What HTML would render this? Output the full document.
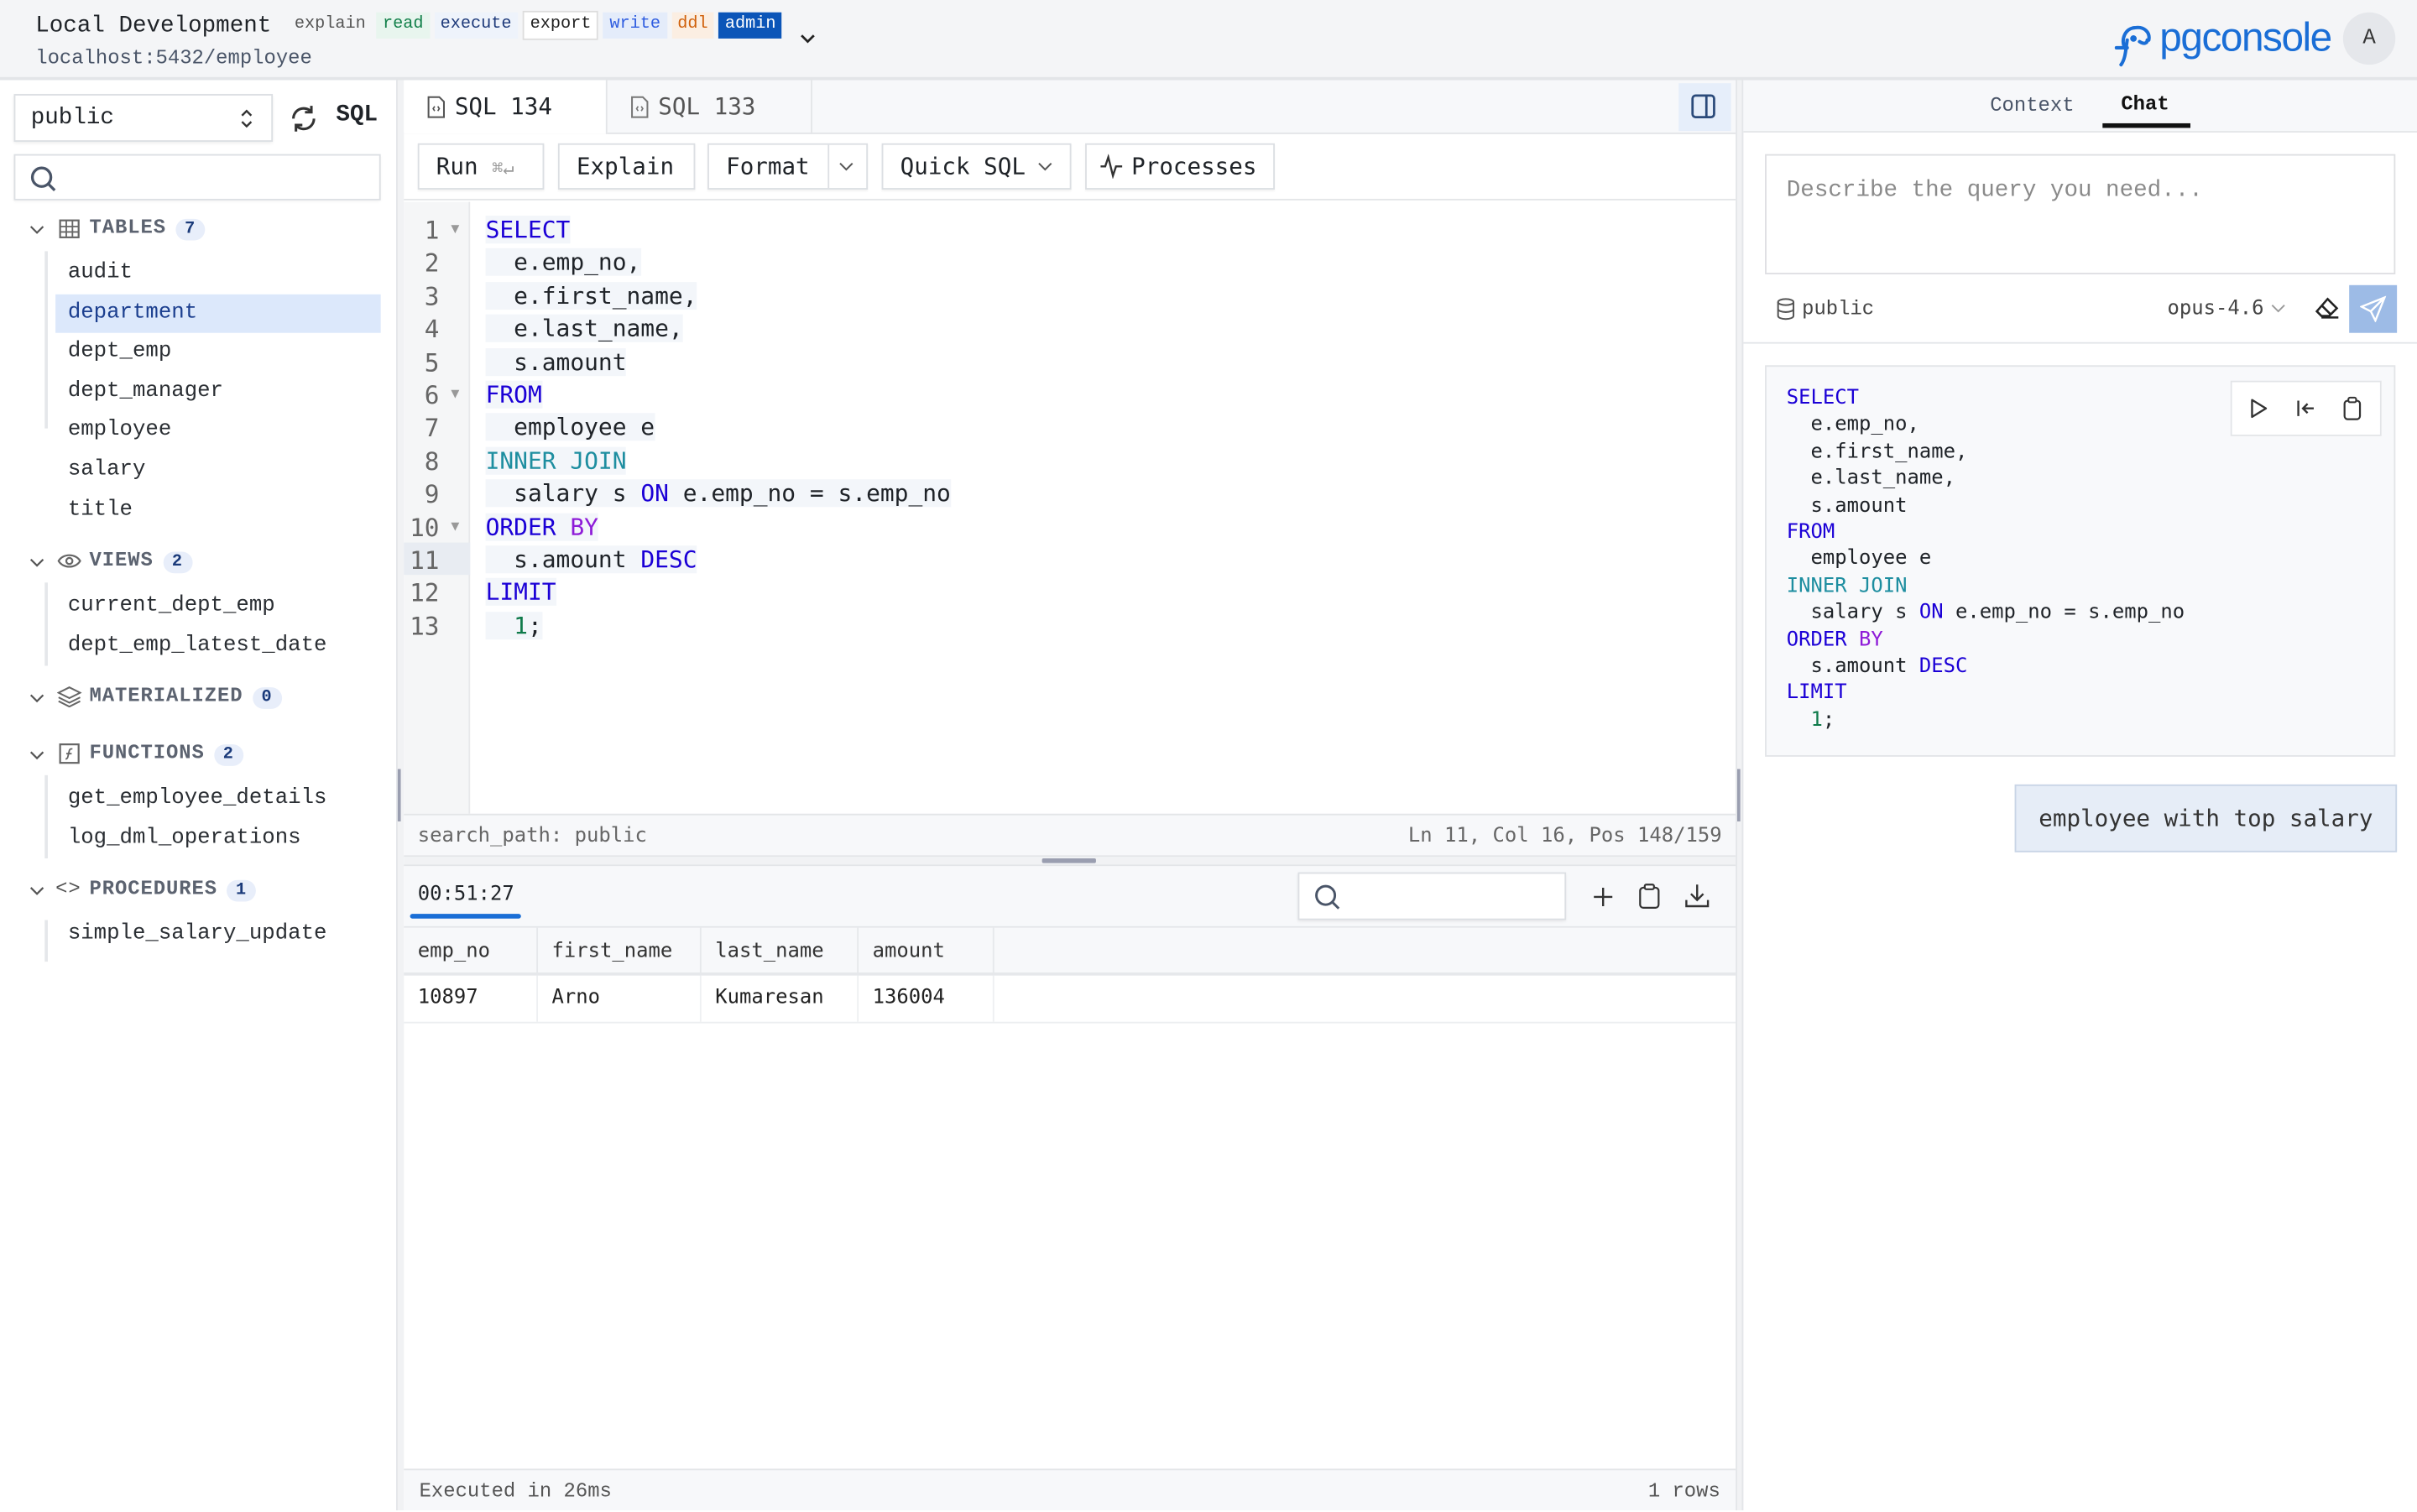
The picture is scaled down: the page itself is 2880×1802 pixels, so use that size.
<!DOCTYPE html>
<html><head><meta charset="utf-8">
<style>
*{box-sizing:border-box;margin:0;padding:0}
html,body{width:2880px;height:1800px;overflow:hidden;background:#fff}
#w{position:absolute;left:0;top:0;width:1568px;height:980px;transform:scale(1.836735);transform-origin:0 0;font-family:"Liberation Mono",monospace;color:#1f2328;background:#fff}
.a{position:absolute}
.dj{font-family:"DejaVu Sans Mono",monospace}
.hdr{left:0;top:0;width:1568px;height:52px;background:#f4f5f7;border-bottom:2px solid #e3e5e8}
.tag{display:inline-block;font-size:11px;padding:2px 4px;margin-right:3px;vertical-align:middle;line-height:13px}
.side{left:0;top:52px;width:257px;height:928px;background:#fff}
.sec{font-size:13px;font-weight:bold;color:#5c6370;letter-spacing:.5px}
.badge{display:inline-block;background:#e8eefa;color:#1a3a7a;border-radius:8px;font-size:11px;padding:1px 6px;margin-left:6px;font-weight:bold}
.item{font-size:14px;color:#2a2e33;height:25.6px;line-height:25.6px;padding-left:8px}
.btn{position:absolute;top:93px;height:30px;border:1px solid #dcdfe3;background:#fff;font-size:15px;line-height:28px;padding:0 11px;box-shadow:0 1px 1px rgba(0,0,0,.05)}
.code{font-size:15.2px;line-height:21.4px}
.code div{height:21.4px;white-space:pre}
.k{color:#1b00d6}.t{color:#1e8ea0}.p{color:#8e1cd8}.n{color:#0f7a4a}
.hl{background:#f3f6fa}
.ln div{height:21.4px;text-align:right;padding-right:20px;color:#666;position:relative}
.tri{position:absolute;right:7px;top:0;font-size:9px;color:#999}
.th{position:absolute;top:602px;height:31px;line-height:31px;font-size:13px;color:#333;padding-left:9px;border-right:1px solid #e6e8eb}
.td{position:absolute;top:633px;height:30px;line-height:30px;font-size:13px;color:#222;padding-left:9px;border-right:1px solid #eef0f2}
.cc{font-size:13px;line-height:17.4px}
.cc div{height:17.4px;white-space:pre}
</style></head><body><div id="w">

<div class="a hdr">
 <div class="a" style="left:23px;top:7px;font-size:15px;white-space:nowrap">Local Development
  <span class="tag" style="color:#555;padding-left:6px">explain</span><span class="tag" style="background:#e8f5ee;color:#12804a">read</span><span class="tag" style="background:#eef3fb;color:#1e3a7a">execute</span><span class="tag" style="border:1px solid #ddd;background:#fff;color:#222">export</span><span class="tag" style="background:#e4ecfa;color:#2f5de0">write</span><span class="tag" style="background:#fbeee2;color:#d0600a">ddl</span><span class="tag" style="background:#0b55b8;color:#fff">admin</span>
 </div>
 <svg class="a" style="left:518px;top:20px" width="12" height="10" viewBox="0 0 12 10"><path d="M2 3l4 4 4-4" fill="none" stroke="#222" stroke-width="1.5"/></svg>
 <div class="a" style="left:23px;top:30px;font-size:13px;color:#4a5568">localhost:5432/employee</div>
 <svg class="a" style="left:1371px;top:12px" width="32" height="32" viewBox="0 0 32 32"><path d="M8 20 C4 14 8 6 14 6 C20 5 24 9 23 14 M13 12 a1 1 0 1 0 .1 0 M17 15 C20 17 22 16 22 14 M2 19 L9 19 M9 14 C8 20 8 26 5 30" fill="none" stroke="#1a6ed6" stroke-width="2.2" stroke-linecap="round"/></svg>
 <div class="a" style="left:1401px;top:9px;font-family:'Liberation Sans',sans-serif;font-size:26px;color:#1a6ed6;letter-spacing:-0.8px">pgconsole</div>
 <div class="a" style="left:1520px;top:8px;width:34px;height:34px;border-radius:17px;background:#e5e7eb;text-align:center;line-height:34px;font-size:14px;color:#333">A</div>
</div>

<div class="a side">
 <div class="a" style="left:9px;top:9px;width:168px;height:31px;border:1px solid #dcdfe3;box-shadow:0 1px 2px rgba(0,0,0,.08);font-size:15px;line-height:29px;padding-left:10px">public</div>
 <svg class="a" style="left:154px;top:16px" width="12" height="18" viewBox="0 0 12 18"><path d="M3 7l3-3 3 3M3 11l3 3 3-3" fill="none" stroke="#333" stroke-width="1.3"/></svg>
 <svg class="a" style="left:187px;top:15px" width="20" height="20" viewBox="0 0 24 24"><path d="M20 12a8 8 0 0 1-14 5.3M4 12A8 8 0 0 1 18 6.7M18 2v5h-5M6 22v-5h5" fill="none" stroke="#333" stroke-width="2"/></svg>
 <div class="a" style="left:218px;top:14px;font-size:15px;font-weight:bold">SQL</div>
 <div class="a" style="left:9px;top:48px;width:238px;height:30px;border:1px solid #dcdfe3;box-shadow:0 1px 2px rgba(0,0,0,.06)"></div>
 <svg class="a" style="left:19px;top:55px" width="18" height="18" viewBox="0 0 18 18"><circle cx="8" cy="8" r="6" fill="none" stroke="#4a5568" stroke-width="1.8"/><path d="M12.5 12.5l4 4" stroke="#4a5568" stroke-width="1.8"/></svg>

 <svg class="a" style="left:19px;top:93px" width="10" height="8"><path d="M1 2l4 4 4-4" fill="none" stroke="#555" stroke-width="1.2"/></svg>
 <svg class="a" style="left:38px;top:90px" width="14" height="13" viewBox="0 0 14 13"><rect x="1" y="1" width="12" height="11" fill="none" stroke="#666" stroke-width="1.2"/><path d="M1 5h12M1 8.5h12M5 1v11M9 1v11" stroke="#666" stroke-width="1"/></svg>
 <div class="a sec" style="left:58px;top:88px">TABLES<span class="badge">7</span></div>
 <div class="a" style="left:29px;top:111px;width:2px;height:115px;background:#e5e7ea"></div>
 <div class="a" style="left:36px;top:113px;width:211px">
  <div class="item">audit</div>
  <div class="item" style="background:#dce8fb;color:#1c3f8f">department</div>
  <div class="item">dept_emp</div><div class="item">dept_manager</div><div class="item">employee</div><div class="item">salary</div><div class="item">title</div>
 </div>

 <svg class="a" style="left:19px;top:309px" width="10" height="8"><path d="M1 2l4 4 4-4" fill="none" stroke="#555" stroke-width="1.2"/></svg>
 <svg class="a" style="left:37px;top:306px" width="16" height="12" viewBox="0 0 16 12"><path d="M1 6C4 1 12 1 15 6C12 11 4 11 1 6Z" fill="none" stroke="#666" stroke-width="1.2"/><circle cx="8" cy="6" r="2" fill="none" stroke="#666" stroke-width="1.2"/></svg>
 <div class="a sec" style="left:58px;top:304px">VIEWS<span class="badge">2</span></div>
 <div class="a" style="left:29px;top:326px;width:2px;height:54px;background:#e5e7ea"></div>
 <div class="a" style="left:36px;top:329px"><div class="item">current_dept_emp</div><div class="item">dept_emp_latest_date</div></div>

 <svg class="a" style="left:19px;top:397px" width="10" height="8"><path d="M1 2l4 4 4-4" fill="none" stroke="#555" stroke-width="1.2"/></svg>
 <svg class="a" style="left:37px;top:393px" width="16" height="14" viewBox="0 0 16 14"><path d="M8 1L15 4.5 8 8 1 4.5Z M1 7.5L8 11 15 7.5 M1 10L8 13.5 15 10" fill="none" stroke="#666" stroke-width="1.1"/></svg>
 <div class="a sec" style="left:58px;top:392px">MATERIALIZED<span class="badge">0</span></div>

 <svg class="a" style="left:19px;top:434px" width="10" height="8"><path d="M1 2l4 4 4-4" fill="none" stroke="#555" stroke-width="1.2"/></svg>
 <svg class="a" style="left:38px;top:430px" width="14" height="14" viewBox="0 0 14 14"><rect x="1" y="1" width="12" height="12" fill="none" stroke="#666" stroke-width="1.2"/><path d="M9 4C7 3.5 7 5 6.5 7S6 10.5 4.5 10.5M5 7h3.5" fill="none" stroke="#666" stroke-width="1"/></svg>
 <div class="a sec" style="left:58px;top:429px">FUNCTIONS<span class="badge">2</span></div>
 <div class="a" style="left:29px;top:451px;width:2px;height:54px;background:#e5e7ea"></div>
 <div class="a" style="left:36px;top:454px"><div class="item">get_employee_details</div><div class="item">log_dml_operations</div></div>

 <svg class="a" style="left:19px;top:522px" width="10" height="8"><path d="M1 2l4 4 4-4" fill="none" stroke="#555" stroke-width="1.2"/></svg>
 <div class="a sec" style="left:36px;top:517px;font-weight:normal;color:#555">&lt;&gt;</div>
 <div class="a sec" style="left:58px;top:517px">PROCEDURES<span class="badge">1</span></div>
 <div class="a" style="left:29px;top:545px;width:2px;height:27px;background:#e5e7ea"></div>
 <div class="a" style="left:36px;top:542px"><div class="item">simple_salary_update</div></div>
</div>
<div class="a" style="left:257px;top:52px;width:5px;height:928px;background:#f1f2f4;border-left:1px solid #e4e6e9"></div>
<div class="a" style="left:258px;top:499px;width:2px;height:34px;background:#9a9eb0"></div>

<div class="a" style="left:262px;top:52px;width:864px;height:35px;background:#f7f8fa;border-bottom:1px solid #e3e5e8"></div>
<div class="a dj" style="left:262px;top:52px;width:132px;height:35px;background:#fff;border-right:1px solid #e3e5e8;font-size:15px;line-height:35px;padding-left:33px">SQL 134</div>
<div class="a dj" style="left:394px;top:52px;width:133px;height:35px;border-right:1px solid #e3e5e8;font-size:15px;line-height:35px;padding-left:33px;color:#555">SQL 133</div>
<svg class="a" style="left:277px;top:62px" width="12" height="15" viewBox="0 0 12 15"><path d="M1 1h7l3 3v10H1Z" fill="none" stroke="#555" stroke-width="1.1"/><path d="M5 7L4 8.5 5 10M7 7l1 1.5L7 10" fill="none" stroke="#555" stroke-width=".9"/></svg>
<svg class="a" style="left:409px;top:62px" width="12" height="15" viewBox="0 0 12 15"><path d="M1 1h7l3 3v10H1Z" fill="none" stroke="#777" stroke-width="1.1"/><path d="M5 7L4 8.5 5 10M7 7l1 1.5L7 10" fill="none" stroke="#777" stroke-width=".9"/></svg>
<div class="a" style="left:1089px;top:54px;width:34px;height:31px;background:#e6eefa"></div>
<svg class="a" style="left:1097px;top:61px" width="16" height="16" viewBox="0 0 16 16"><rect x="1" y="1" width="14" height="14" rx="2" fill="none" stroke="#2b4a7a" stroke-width="1.5"/><path d="M10 1v14" stroke="#2b4a7a" stroke-width="1.5"/></svg>

<div class="a" style="left:262px;top:87px;width:864px;height:43px;border-bottom:1px solid #e3e5e8"></div>
<div class="btn dj" style="left:271px;width:82px">Run <span style="color:#999;font-size:12px">⌘↵</span></div>
<div class="btn dj" style="left:362px;width:89px">Explain</div>
<div class="btn dj" style="left:459px;width:104px">Format</div>
<div class="a" style="left:537px;top:94px;width:1px;height:28px;background:#dcdfe3"></div>
<svg class="a" style="left:544px;top:104px" width="10" height="8"><path d="M1 2l4 4 4-4" fill="none" stroke="#555" stroke-width="1.1"/></svg>
<div class="btn dj" style="left:572px;width:123px">Quick SQL</div>
<svg class="a" style="left:673px;top:104px" width="10" height="8"><path d="M1 2l4 4 4-4" fill="none" stroke="#555" stroke-width="1.1"/></svg>
<div class="btn dj" style="left:704px;width:123px;padding-left:29px">Processes</div>
<svg class="a" style="left:713px;top:100px" width="16" height="16" viewBox="0 0 16 16"><path d="M1 8h3l2-6 3 12 2-6h4" fill="none" stroke="#333" stroke-width="1.3"/></svg>

<div class="a" style="left:262px;top:131px;width:43px;height:397px;background:#f5f6f7;border-right:1px solid #e8e9eb"></div>
<div class="a" style="left:262px;top:352px;width:43px;height:21.4px;background:#e8ecf2"></div>
<div class="a ln dj code" style="left:262px;top:139px;width:43px;font-size:16px">
<div>1<span class="tri">▼</span></div><div>2</div><div>3</div><div>4</div><div>5</div><div>6<span class="tri">▼</span></div><div>7</div><div>8</div><div>9</div><div>10<span class="tri">▼</span></div><div>11</div><div>12</div><div>13</div>
</div>
<div class="a dj code" style="left:315px;top:139px">
<div><span class="k hl">SELECT</span></div>
<div><span class="hl">  e.emp_no,</span></div>
<div><span class="hl">  e.first_name,</span></div>
<div><span class="hl">  e.last_name,</span></div>
<div><span class="hl">  s.amount</span></div>
<div><span class="k hl">FROM</span></div>
<div><span class="hl">  employee e</span></div>
<div><span class="t hl">INNER JOIN</span></div>
<div><span class="hl">  salary s <span class="k">ON</span> e.emp_no = s.emp_no</span></div>
<div><span class="hl"><span class="k">ORDER</span> <span class="p">BY</span></span></div>
<div><span class="hl">  s.amount <span class="k">DESC</span></span></div>
<div><span class="k hl">LIMIT</span></div>
<div><span class="hl">  <span class="n">1</span>;</span></div>
</div>

<div class="a dj" style="left:262px;top:528px;width:864px;height:28px;background:#f7f8fa;border-top:1px solid #e3e5e8;border-bottom:1px solid #e3e5e8;font-size:13px;line-height:27px;color:#666;padding:0 9px">search_path: public<span style="float:right">Ln 11, Col 16, Pos 148/159</span></div>
<div class="a" style="left:262px;top:556px;width:864px;height:6px;background:#f1f2f4;border-bottom:1px solid #e3e5e8"></div>
<div class="a" style="left:676px;top:557px;width:35px;height:3px;background:#9a9eb0;border-radius:1px"></div>

<div class="a" style="left:262px;top:562px;width:864px;height:40px;background:#f7f8fa;border-bottom:1px solid #e3e5e8"></div>
<div class="a dj" style="left:271px;top:573px;font-size:13px">00:51:27</div>
<div class="a" style="left:266px;top:593px;width:72px;height:3px;background:#1a6ed6;border-radius:2px"></div>
<div class="a" style="left:842px;top:566px;width:174px;height:31px;background:#fff;border:1px solid #dcdfe3;box-shadow:0 1px 2px rgba(0,0,0,.08)"></div>
<svg class="a" style="left:852px;top:573px" width="18" height="18" viewBox="0 0 18 18"><circle cx="8" cy="8" r="6" fill="none" stroke="#4a5568" stroke-width="1.6"/><path d="M12.5 12.5l4 4" stroke="#4a5568" stroke-width="1.6"/></svg>
<svg class="a" style="left:1033px;top:575px" width="14" height="14"><path d="M7 1v12M1 7h12" stroke="#333" stroke-width="1.3"/></svg>
<svg class="a" style="left:1063px;top:573px" width="14" height="17" viewBox="0 0 14 17"><rect x="1" y="3" width="12" height="13" rx="2" fill="none" stroke="#333" stroke-width="1.2"/><rect x="4" y="1" width="6" height="3" rx="1" fill="#fff" stroke="#333" stroke-width="1.2"/></svg>
<svg class="a" style="left:1093px;top:573px" width="16" height="16" viewBox="0 0 16 16"><path d="M8 1v10M4 7l4 4 4-4M1 11v4h14v-4" fill="none" stroke="#333" stroke-width="1.3"/></svg>

<div class="a" style="left:262px;top:602px;width:864px;height:31px;background:#f7f8fa;border-bottom:2px solid #e6e8eb"></div>
<div class="th dj" style="left:262px;width:87px">emp_no</div>
<div class="th dj" style="left:349px;width:106px">first_name</div>
<div class="th dj" style="left:455px;width:102px">last_name</div>
<div class="th dj" style="left:557px;width:88px">amount</div>
<div class="td dj" style="left:262px;width:87px">10897</div>
<div class="td dj" style="left:349px;width:106px">Arno</div>
<div class="td dj" style="left:455px;width:102px">Kumaresan</div>
<div class="td dj" style="left:557px;width:88px">136004</div>
<div class="a" style="left:262px;top:663px;width:864px;height:1px;background:#eceef0"></div>

<div class="a" style="left:262px;top:953px;width:864px;height:27px;background:#f7f8fa;border-top:1px solid #e3e5e8;font-size:13px;line-height:27px;color:#555;padding:0 10px">Executed in 26ms<span style="float:right">1 rows</span></div>
<div class="a" style="left:1126px;top:52px;width:5px;height:928px;background:#f1f2f4;border-left:1px solid #e4e6e9;border-right:1px solid #e4e6e9"></div>
<div class="a" style="left:1127px;top:499px;width:2px;height:34px;background:#9a9eb0"></div>

<div class="a" style="left:1131px;top:52px;width:437px;height:34px;background:#f7f8fa;border-bottom:1px solid #e3e5e8"></div>
<div class="a" style="left:1291px;top:61px;font-size:13px;color:#4a5568">Context</div>
<div class="a" style="left:1376px;top:60px;font-size:13px;font-weight:bold;color:#111">Chat</div>
<div class="a" style="left:1364px;top:80px;width:57px;height:3px;background:#111"></div>
<div class="a" style="left:1145px;top:100px;width:409px;height:78px;border:1px solid #dedfe2;font-size:15px;color:#8a8a8a;padding:14px 13px">Describe the query you need...</div>
<svg class="a" style="left:1152px;top:193px" width="13" height="15" viewBox="0 0 13 15"><ellipse cx="6.5" cy="3" rx="5" ry="2" fill="none" stroke="#555" stroke-width="1.1"/><path d="M1.5 3v9c0 1.1 2.2 2 5 2s5-.9 5-2V3M1.5 7.5c0 1.1 2.2 2 5 2s5-.9 5-2" fill="none" stroke="#555" stroke-width="1.1"/></svg>
<div class="a" style="left:1169px;top:193px;font-size:13px;color:#444">public</div>
<div class="a dj" style="left:1406px;top:193px;font-size:13px;color:#444">opus-4.6</div>
<svg class="a" style="left:1473px;top:197px" width="10" height="7"><path d="M1 1l4 4 4-4" fill="none" stroke="#999" stroke-width="1"/></svg>
<svg class="a" style="left:1501px;top:192px" width="17" height="16" viewBox="0 0 17 16"><path d="M9 2l6 6-5 5H5L2 10Z M5 6l6 6 M5 14h11" fill="none" stroke="#222" stroke-width="1.4"/></svg>
<div class="a" style="left:1524px;top:185px;width:31px;height:31px;background:#9dbbe6"></div>
<svg class="a" style="left:1531px;top:192px" width="17" height="17" viewBox="0 0 17 17"><path d="M16 1L1 7l6 3 3 6Z M16 1L7 10" fill="none" stroke="#fff" stroke-width="1.3"/></svg>
<div class="a" style="left:1131px;top:222px;width:437px;height:1px;background:#e3e5e8"></div>

<div class="a" style="left:1145px;top:237px;width:409px;height:254px;background:#f8f9fb;border:1px solid #e3e5e8"></div>
<div class="a dj cc" style="left:1159px;top:250px">
<div><span class="k">SELECT</span></div><div>  e.emp_no,</div><div>  e.first_name,</div><div>  e.last_name,</div><div>  s.amount</div><div><span class="k">FROM</span></div><div>  employee e</div><div><span class="t">INNER JOIN</span></div><div>  salary s <span class="k">ON</span> e.emp_no = s.emp_no</div><div><span class="k">ORDER</span> <span class="p">BY</span></div><div>  s.amount <span class="k">DESC</span></div><div><span class="k">LIMIT</span></div><div>  <span class="n">1</span>;</div>
</div>
<div class="a" style="left:1447px;top:247px;width:98px;height:36px;background:#fff;border:1px solid #e3e5e8"></div>
<svg class="a" style="left:1459px;top:258px" width="13" height="14" viewBox="0 0 13 14"><path d="M2 1.5l9 5.5-9 5.5Z" fill="none" stroke="#333" stroke-width="1.3" stroke-linejoin="round"/></svg>
<svg class="a" style="left:1489px;top:258px" width="14" height="14" viewBox="0 0 14 14"><path d="M2 2v10M12 7H5M8 4L5 7l3 3" fill="none" stroke="#333" stroke-width="1.3"/></svg>
<svg class="a" style="left:1520px;top:257px" width="12" height="16" viewBox="0 0 12 16"><rect x="1" y="3" width="10" height="12" rx="2" fill="none" stroke="#333" stroke-width="1.2"/><rect x="3.5" y="1" width="5" height="3" rx="1" fill="#fff" stroke="#333" stroke-width="1.1"/></svg>

<div class="a dj" style="left:1307px;top:509px;width:248px;height:44px;background:#e6edf7;border:1px solid #c9d5e6;font-size:15px;line-height:42px;text-align:center;color:#333">employee with top salary</div>
</div></body></html>
